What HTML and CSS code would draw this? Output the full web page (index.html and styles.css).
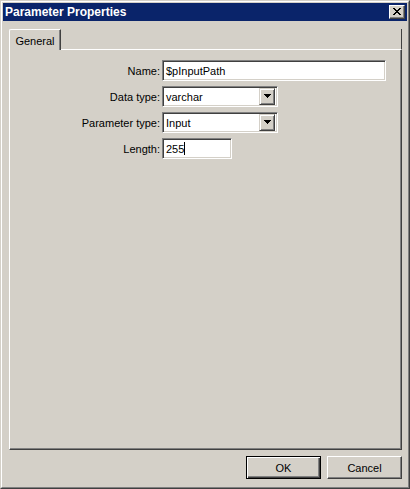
FILE: index.html
```html
<!DOCTYPE html>
<html lang="en">
<head>
    <meta charset="UTF-8">
    <title>Parameter Properties</title>
    <link rel="stylesheet" href="styles.css">
</head>
<body>
    <div class="window">
        <div class="frame">
            <div class="titlebar">
                <span class="title">Parameter Properties</span>
                <div class="close-btn">
                    <svg width="8" height="7" viewBox="0 0 8 7" shape-rendering="crispEdges">
                        <path d="M0 0h2v1h-2z M6 0h2v1h-2z M1 1h2v1h-2z M5 1h2v1h-2z M2 2h4v1h-4z M3 3h2v1h-2z M2 4h4v1h-4z M1 5h2v1h-2z M5 5h2v1h-2z M0 6h2v1h-2z M6 6h2v1h-2z" fill="#000"/>
                    </svg>
                </div>
            </div>

            <div class="content">
                <div class="tabs">
                    <div class="tab">General</div>
                    <div class="tab-fill"></div>
                </div>
                <div class="panel">
                    <div class="form">
                        <label class="label">Name:</label>
                        <div class="field field-name"><span>$pInputPath</span></div>

                        <label class="label">Data type:</label>
                        <div class="field combo">
                            <span>varchar</span>
                            <div class="drop-btn">
                                <svg width="7" height="4" viewBox="0 0 7 4" shape-rendering="crispEdges"><path d="M0 0h7v1h-7z M1 1h5v1h-5z M2 2h3v1h-3z M3 3h1v1h-1z" fill="#000"/></svg>
                            </div>
                        </div>

                        <label class="label">Parameter type:</label>
                        <div class="field combo">
                            <span>Input</span>
                            <div class="drop-btn">
                                <svg width="7" height="4" viewBox="0 0 7 4" shape-rendering="crispEdges"><path d="M0 0h7v1h-7z M1 1h5v1h-5z M2 2h3v1h-3z M3 3h1v1h-1z" fill="#000"/></svg>
                            </div>
                        </div>

                        <label class="label">Length:</label>
                        <div class="field field-length"><span>255</span><span class="caret"></span></div>
                    </div>
                </div>
                <div class="buttons">
                    <button class="btn btn-default">OK</button>
                    <button class="btn">Cancel</button>
                </div>
            </div>
        </div>
    </div>
</body>
</html>
```

FILE: styles.css
```css
body {
    margin: 0;
    font-family: 'Liberation Sans', Arial, sans-serif;
    font-size: 11px;
    color: #000;
    background-color: #d4d0c8;
}
.window {
    width: 410px;
    height: 489px;
    box-sizing: border-box;
    border: 1px solid;
    border-color: #d4d0c8 #404040 #404040 #d4d0c8;
}
.frame {
    height: 100%;
    box-sizing: border-box;
    border: 1px solid;
    border-color: #fff #808080 #808080 #fff;
    padding: 1px;
    background-color: #d4d0c8;
    display: flex;
    flex-direction: column;
}
.titlebar {
    height: 18px;
    flex: none;
    background-color: #0a246a;
    display: flex;
    align-items: center;
    justify-content: space-between;
    padding: 0 2px;
}
.title {
    color: #fff;
    font-weight: bold;
    font-size: 12px;
}
.close-btn {
    width: 16px;
    height: 14px;
    box-sizing: border-box;
    background-color: #d4d0c8;
    border: 1px solid;
    border-color: #fff #404040 #404040 #fff;
    box-shadow: inset -1px -1px #808080;
    display: flex;
    align-items: center;
    justify-content: center;
    padding: 0 1px 1px 0;
}
.content {
    flex: 1;
    display: flex;
    flex-direction: column;
    padding: 8px 5px 7px 6px;
}
.tabs {
    height: 21px;
    display: flex;
}
.tab {
    width: 52px;
    box-sizing: border-box;
    border-top: 1px solid #fff;
    border-left: 1px solid #fff;
    border-right: 1px solid #404040;
    border-top-left-radius: 2px;
    box-shadow: inset -1px 0 #808080;
    text-align: center;
    padding-top: 5px;
}
.tab-fill {
    flex: 1;
    border-bottom: 1px solid #fff;
    border-right: 1px solid #404040;
}
.panel {
    height: 400px;
    box-sizing: border-box;
    border: 1px solid;
    border-top: none;
    border-color: #fff #404040 #404040 #fff;
    box-shadow: inset -1px -1px #808080;
    padding-top: 10px;
}
.form {
    display: grid;
    grid-template-columns: 150px auto;
    column-gap: 2px;
    row-gap: 5px;
    align-items: center;
    justify-items: start;
}
.label {
    justify-self: end;
}
.field {
    height: 21px;
    box-sizing: border-box;
    background: #fff;
    border: 1px solid;
    border-color: #808080 #fff #fff #808080;
    box-shadow: inset 1px 1px #404040, inset -1px -1px #d4d0c8;
    display: flex;
    align-items: center;
    padding: 0 3px;
}
.field-name {
    width: 224px;
}
.field-length {
    width: 70px;
}
.caret {
    width: 1px;
    height: 13px;
    background: #000;
}
.combo {
    width: 116px;
    justify-content: space-between;
    padding: 2px 2px 2px 3px;
}
.drop-btn {
    width: 16px;
    height: 17px;
    box-sizing: border-box;
    background-color: #d4d0c8;
    border: 1px solid;
    border-color: #d4d0c8 #404040 #404040 #d4d0c8;
    box-shadow: inset 1px 1px #fff, inset -1px -1px #808080;
    display: flex;
    align-items: center;
    justify-content: center;
    padding-bottom: 1px;
}
.buttons {
    display: flex;
    justify-content: flex-end;
    gap: 6px;
    margin-top: 6px;
}
.btn {
    width: 75px;
    height: 23px;
    box-sizing: border-box;
    font-family: 'Liberation Sans', Arial, sans-serif;
    font-size: 11px;
    color: #000;
    background-color: #d4d0c8;
    border: 1px solid;
    border-color: #fff #404040 #404040 #fff;
    box-shadow: inset -1px -1px #808080;
    padding: 0;
}
.btn-default {
    border-color: #000;
    box-shadow: inset 1px 1px #fff, inset -1px -1px #404040, inset -2px -2px #808080;
}
```
